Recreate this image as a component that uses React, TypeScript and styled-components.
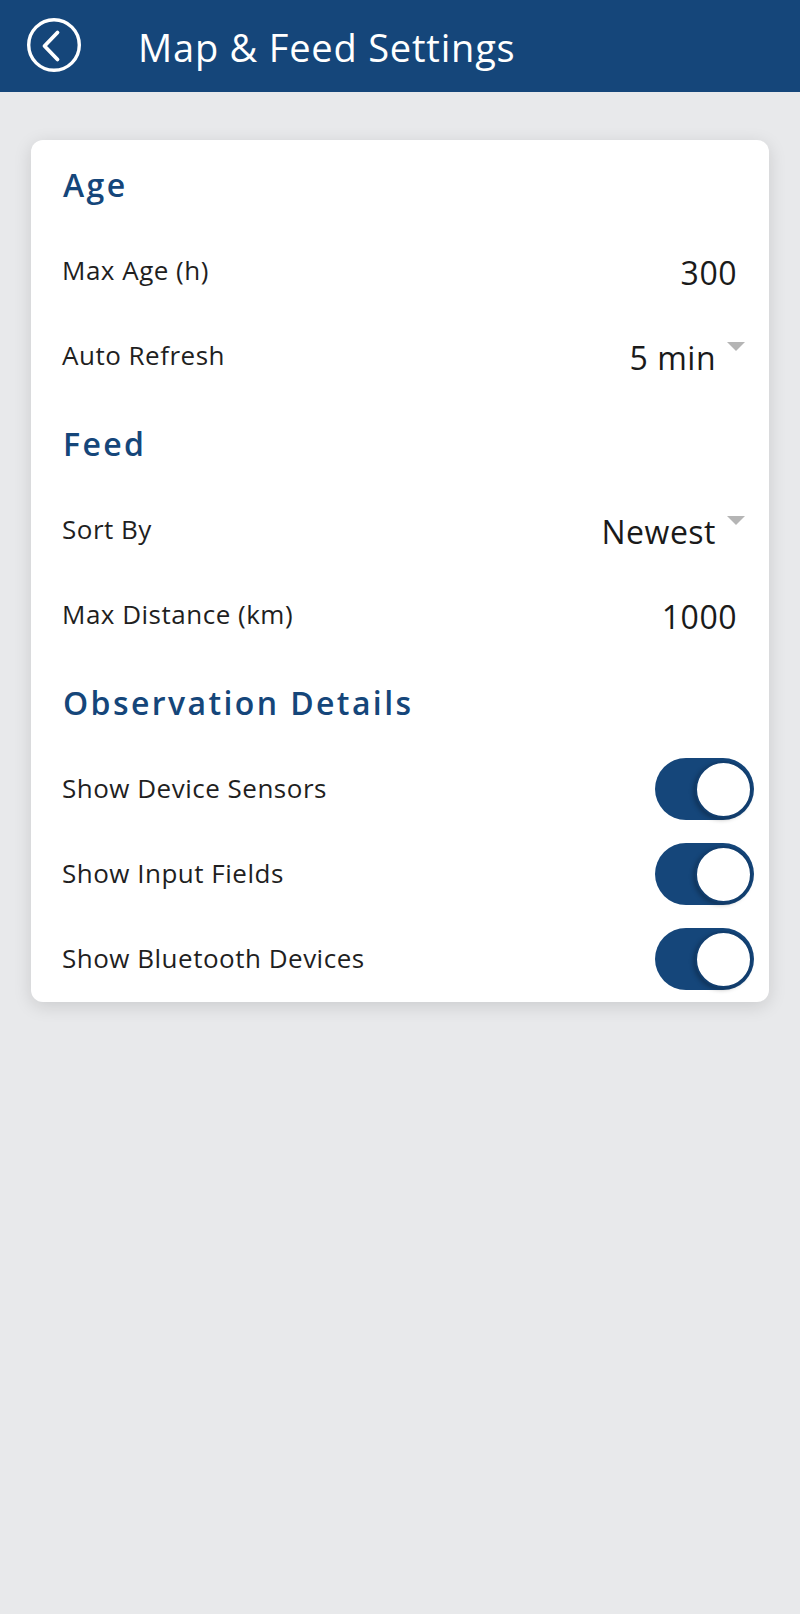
import React from "react";
import styled, { createGlobalStyle } from "styled-components";

const GlobalStyle = createGlobalStyle`
  html, body {
    margin: 0;
    padding: 0;
    background: #e8e9eb;
    font-family: "Open Sans", "Noto Sans", sans-serif;
  }
  * { box-sizing: border-box; }
`;

const Page = styled.div`
  min-height: 1614px;
  background: #e8e9eb;
`;

const TopBar = styled.header`
  height: 92px;
  background: #15467a;
  display: flex;
  align-items: center;
  padding-left: 26px;
  gap: 56px;
`;

const BackButton = styled.button`
  width: 56px;
  height: 56px;
  padding: 0;
  border: none;
  background: transparent;
  display: flex;
  align-items: center;
  justify-content: center;
  margin-top: -2px;
`;

const Title = styled.h1`
  margin: 0;
  color: #ffffff;
  font-size: 38px;
  font-weight: 400;
  letter-spacing: 0.8px;
  line-height: 1;
  padding-top: 2px;
`;

const Content = styled.main`
  padding: 48px 31px;
`;

const Card = styled.section`
  background: #ffffff;
  border-radius: 12px;
  box-shadow: 0 4px 18px rgba(0, 0, 0, 0.13);
  overflow: hidden;
`;

const SectionTitle = styled.h2`
  margin: 0;
  height: 89px;
  display: flex;
  align-items: center;
  padding-left: 32px;
  color: #15467a;
  font-size: 32px;
  font-weight: 600;
  letter-spacing: 2.4px;
`;

const Row = styled.div`
  height: 85px;
  display: flex;
  align-items: center;
  justify-content: space-between;
  padding: 0 15px 4px 31px;
`;

const Label = styled.span`
  color: #1f1f1f;
  font-size: 26px;
  font-weight: 400;
  letter-spacing: 0.5px;
`;

const InputValue = styled.span`
  color: #1a1a1a;
  font-size: 32px;
  letter-spacing: 0.5px;
  margin-right: 17px;
  padding-top: 5px;
`;

const SelectValue = styled.div`
  display: flex;
  align-items: center;
  gap: 11px;
  margin-right: 9px;
  padding-top: 5px;
`;

const SelectText = styled.span`
  color: #1a1a1a;
  font-size: 32px;
  letter-spacing: 0.5px;
`;

const Caret = styled.span`
  width: 0;
  height: 0;
  border-left: 9.5px solid transparent;
  border-right: 9.5px solid transparent;
  border-top: 9px solid #b5b5b5;
  margin-bottom: 22px;
`;

const Track = styled.div<{ $on: boolean }>`
  width: 99px;
  height: 62px;
  border-radius: 31px;
  background: ${(p) => (p.$on ? "#15467a" : "#c9c9c9")};
  display: flex;
  align-items: center;
  justify-content: ${(p) => (p.$on ? "flex-end" : "flex-start")};
  padding: 0 2px;
  margin-top: 3px;
`;

const Knob = styled.div`
  width: 57px;
  height: 57px;
  border-radius: 50%;
  background: #ffffff;
  border: 2px solid #123e6e;
  box-shadow: -2px 2px 4px rgba(0, 0, 0, 0.25);
`;

const BackIcon = () => (
  <svg width="56" height="56" viewBox="0 0 56 56" fill="none">
    <circle cx="28" cy="28" r="25.3" stroke="#ffffff" strokeWidth="3.4" />
    <path
      d="M31.5 15.5 L18.5 29 L31.5 42.5"
      stroke="#ffffff"
      strokeWidth="3.8"
      strokeLinecap="round"
      strokeLinejoin="round"
    />
  </svg>
);

const InputRow = ({ label, value }: { label: string; value: string }) => (
  <Row>
    <Label>{label}</Label>
    <InputValue>{value}</InputValue>
  </Row>
);

const SelectRow = ({ label, value }: { label: string; value: string }) => (
  <Row>
    <Label>{label}</Label>
    <SelectValue>
      <SelectText>{value}</SelectText>
      <Caret />
    </SelectValue>
  </Row>
);

const ToggleRow = ({ label, on }: { label: string; on: boolean }) => (
  <Row>
    <Label>{label}</Label>
    <Track $on={on}>
      <Knob />
    </Track>
  </Row>
);

export default function App() {
  return (
    <Page>
      <GlobalStyle />
      <TopBar>
        <BackButton aria-label="Back">
          <BackIcon />
        </BackButton>
        <Title>Map &amp; Feed Settings</Title>
      </TopBar>
      <Content>
        <Card>
          <SectionTitle>Age</SectionTitle>
          <InputRow label="Max Age (h)" value="300" />
          <SelectRow label="Auto Refresh" value="5 min" />
          <SectionTitle>Feed</SectionTitle>
          <SelectRow label="Sort By" value="Newest" />
          <InputRow label="Max Distance (km)" value="1000" />
          <SectionTitle>Observation Details</SectionTitle>
          <ToggleRow label="Show Device Sensors" on />
          <ToggleRow label="Show Input Fields" on />
          <ToggleRow label="Show Bluetooth Devices" on />
        </Card>
      </Content>
    </Page>
  );
}
